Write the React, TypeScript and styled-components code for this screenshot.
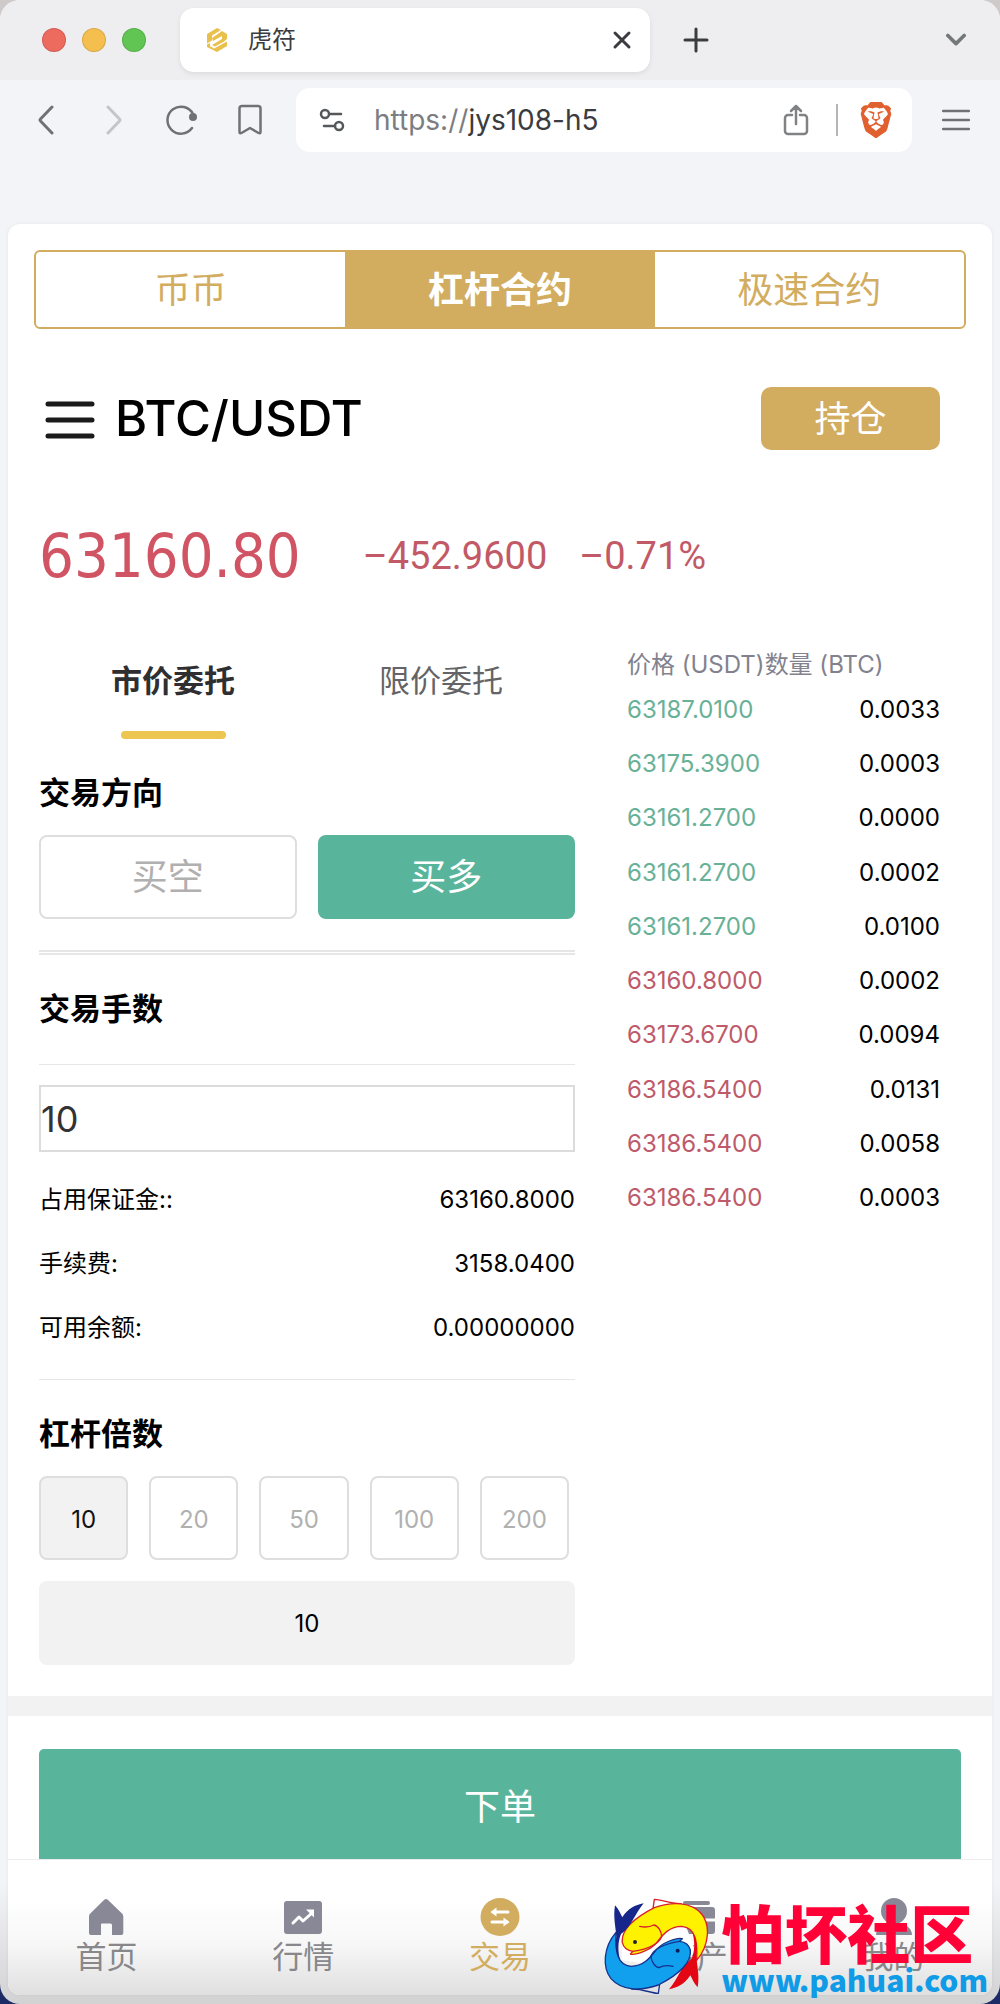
import React, { useState } from "react";
import styled, { createGlobalStyle } from "styled-components";
import { SiBrave } from "react-icons/si";

const gold = "#d2ad60";
const green = "#58b59b";
const sans = `Inter, "Noto Sans CJK SC", sans-serif`;

const GlobalStyle = createGlobalStyle`
  *, *::before, *::after { box-sizing: border-box; }
  body {
    margin: 0;
    background: linear-gradient(#cfcaca 0 50%, #1c2a66 50% 100%);
    font-family: ${sans};
    color: #000;
  }
  button, input { font: inherit; color: inherit; margin: 0; }
  button { padding: 0; border: 0; background: none; cursor: pointer; }
  a { color: inherit; text-decoration: none; }
  svg { display: block; }
`;

/* ---------- browser frame ---------- */

const Window = styled.div`
  position: relative;
  min-height: 100vh;
  padding-bottom: 9px;
  background: linear-gradient(#f3f4f7 0, #f3f4f7 calc(100% - 120px), #d2d2d3 100%);
  border-radius: 20px;
  overflow: hidden;
`;

const TabStrip = styled.header`
  display: flex;
  align-items: center;
  height: 80px;
  padding: 0 34px 0 42px;
  background: #eeeef0;
`;

const Lights = styled.div`
  display: flex;
  gap: 16px;
  margin-right: 34px;
`;

const Light = styled.button<{ $color: string }>`
  width: 24px;
  height: 24px;
  border-radius: 50%;
  border: 1px solid rgba(0, 0, 0, 0.12);
  background: ${(p) => p.$color};
`;

const BrowserTab = styled.div`
  display: flex;
  align-items: center;
  flex: 0 1 470px;
  height: 64px;
  padding: 0 18px 0 24px;
  background: #fff;
  border-radius: 14px;
  box-shadow: 0 2px 5px rgba(0, 0, 0, 0.08);
`;

const TabTitle = styled.span`
  flex: 1;
  margin-left: 18px;
  font-size: 24px;
  line-height: 32px;
  color: #3b3c40;
`;

const IconButton = styled.button<{ $size?: number }>`
  display: flex;
  align-items: center;
  justify-content: center;
  flex: none;
  width: ${(p) => p.$size ?? 32}px;
  height: ${(p) => p.$size ?? 32}px;
`;

const NewTab = styled(IconButton)`
  margin-left: 30px;
  margin-right: auto;
`;

const Toolbar = styled.div`
  display: flex;
  align-items: center;
  justify-content: space-between;
  height: 80px;
  padding: 0 28px 0 30px;
`;

const ToolIcons = styled.div`
  display: flex;
  align-items: center;
  gap: 36px;
  margin-right: 30px;
`;

const AddressBar = styled.div`
  display: flex;
  align-items: center;
  flex: 1;
  height: 64px;
  margin-right: 28px;
  padding: 0 18px 0 20px;
  background: #fff;
  border-radius: 14px;
`;

const Url = styled.span`
  flex: 1;
  margin-left: 26px;
  font-size: 28px;
  line-height: 40px;
  color: #3b3c40;
`;

const Scheme = styled.span`
  color: #7b7d81;
`;

const BarDivider = styled.span`
  width: 2px;
  height: 32px;
  margin: 0 20px 0 24px;
  background: #b5b5b8;
`;

/* ---------- page ---------- */

const Page = styled.main`
  margin: 64px 8px 0;
  background: #fff;
  border-radius: 12px;
  box-shadow: 0 0 4px rgba(0, 0, 0, 0.06);
  overflow: hidden;
`;

const Segmented = styled.nav`
  display: grid;
  grid-template-columns: repeat(3, 1fr);
  height: 79px;
  margin: 26px 26px 0;
  border: 2px solid ${gold};
  border-radius: 6px;
`;

const Segment = styled.button<{ $active: boolean }>`
  font-size: 36px;
  line-height: 48px;
  font-weight: ${(p) => (p.$active ? 600 : 400)};
  color: ${(p) => (p.$active ? "#fff" : gold)};
  background: ${(p) => (p.$active ? gold : "transparent")};
`;

const PairBar = styled.div`
  display: flex;
  align-items: center;
  margin-top: 58px;
  padding: 0 52px 0 36px;
`;

const Pair = styled.h1`
  flex: 1;
  margin: 0 0 0 19px;
  font-size: 49px;
  line-height: 60px;
  font-weight: 500;
`;

const PositionButton = styled.button`
  width: 179px;
  height: 63px;
  border-radius: 10px;
  font-size: 36px;
  line-height: 48px;
  color: #fff;
  background: ${gold};
`;

const Quote = styled.div`
  display: flex;
  align-items: center;
  margin-top: 74px;
  padding: 0 31px;
  line-height: 64px;
`;

const LastPrice = styled.strong`
  margin-right: 62px;
  font-family: "DejaVu Sans Condensed", "DejaVu Sans", sans-serif;
  font-size: 61px;
  font-weight: 400;
  color: #d05463;
`;

const Change = styled.span`
  margin-right: 32px;
  font-family: Roboto, sans-serif;
  font-size: 38px;
  color: #c25966;
`;

const Columns = styled.div`
  display: grid;
  grid-template-columns: minmax(0, 536fr) minmax(0, 313fr);
  column-gap: 52px;
  align-items: start;
  margin-top: 61px;
  padding: 0 52px 31px 31px;
`;

const OrderForm = styled.form`
  display: flex;
  flex-direction: column;
  padding-top: 12px;
`;

const OrderTabs = styled.div`
  display: grid;
  grid-template-columns: 1fr 1fr;
`;

const OrderTab = styled.button<{ $active: boolean }>`
  display: flex;
  flex-direction: column;
  align-items: center;
  gap: 30px;
  height: 78px;
  font-size: 31px;
  line-height: 40px;
  font-weight: ${(p) => (p.$active ? 600 : 400)};
  color: ${(p) => (p.$active ? "#2f2f31" : "#646466")};

  &::after {
    content: "";
    width: 105px;
    height: 8px;
    border-radius: 4px;
    background: ${(p) => (p.$active ? "#ecc650" : "transparent")};
  }
`;

const SectionTitle = styled.h2`
  margin: 34px 0 0;
  font-size: 31px;
  line-height: 40px;
  font-weight: 600;
`;

const ButtonRow = styled.div<{ $columns: number; $inset?: boolean }>`
  display: grid;
  grid-template-columns: repeat(${(p) => p.$columns}, 1fr);
  gap: 21px;
  margin-top: 22px;
  padding-right: ${(p) => (p.$inset ? 6 : 0)}px;
`;

const DirectionButton = styled.button<{ $active: boolean }>`
  height: 84px;
  border: ${(p) => (p.$active ? "0" : "2px solid #dedede")};
  border-radius: 8px;
  font-size: 36px;
  line-height: 48px;
  color: ${(p) => (p.$active ? "#fff" : "#b0b0b0")};
  background: ${(p) => (p.$active ? green : "#fff")};
`;

const LeverageButton = styled.button<{ $active: boolean }>`
  height: 84px;
  padding-top: 4px;
  border: 2px solid #dedede;
  border-radius: 8px;
  font-size: 24px;
  line-height: 32px;
  color: ${(p) => (p.$active ? "#111" : "#b0b0b0")};
  background: ${(p) => (p.$active ? "#f2f2f2" : "#fff")};
`;

const Rule = styled.hr<{ $gap: number; $double?: boolean }>`
  width: 100%;
  margin: ${(p) => p.$gap}px 0 0;
  border: 0;
  border-top: ${(p) => (p.$double ? "5px double" : "1px solid")} #e6e6e6;
`;

const LotInput = styled.input`
  width: 100%;
  height: 67px;
  margin-top: 20px;
  padding: 0;
  border: 2px solid #dcdcdc;
  border-radius: 0;
  font-size: 36px;
  line-height: 48px;
  color: #333;
  background: #fff;
`;

const Facts = styled.dl`
  margin: 16px 0 0;
`;

const Fact = styled.div`
  display: flex;
  justify-content: space-between;
  align-items: center;
  height: 64px;
  font-size: 24px;
  line-height: 32px;

  dt, dd { margin: 0; }
`;

const LeverageValue = styled.input`
  width: 100%;
  height: 84px;
  margin-top: 21px;
  border: 0;
  border-radius: 8px;
  font-size: 24px;
  line-height: 32px;
  text-align: center;
  background: #f2f2f2;
`;

const Book = styled.table`
  display: block;
  width: 100%;
  font-size: 24px;
  line-height: 32px;

  thead { display: block; }
  tbody {
    display: flex;
    flex-direction: column;
    justify-content: space-between;
    height: 542px;
  }
  th, td { padding: 0; font-weight: 400; }
`;

const BookHead = styled.tr`
  display: flex;
  height: 34px;
  color: #82828e;
  white-space: nowrap;
`;

const BookRow = styled.tr<{ $up: boolean }>`
  display: flex;
  justify-content: space-between;
  align-items: center;
  height: 54px;

  td:first-child { color: ${(p) => (p.$up ? "#68b197" : "#be5a6a")}; }
`;

const SubmitArea = styled.section`
  padding: 33px 31px 0;
  border-top: 20px solid #f2f2f2;
`;

const SubmitButton = styled.button`
  display: block;
  width: 100%;
  height: 110px;
  padding-top: 6px;
  border-radius: 5px 5px 0 0;
  font-size: 36px;
  line-height: 48px;
  color: #fff;
  background: ${green};
`;

const BottomNav = styled.nav`
  display: grid;
  grid-template-columns: repeat(5, 1fr);
  padding: 38px 0 17px;
  border-top: 1px solid #ececec;
  background: linear-gradient(#fff 30%, #f6f6f6 65%, #dfdfe0 100%);
`;

const NavItem = styled.a<{ $active?: boolean }>`
  display: flex;
  flex-direction: column;
  align-items: center;
  font-size: 31px;
  line-height: 42px;
  color: ${(p) => (p.$active ? gold : "#88888b")};
`;

const Watermark = styled.div`
  position: absolute;
  right: 12px;
  bottom: 8px;
  display: flex;
  align-items: center;
  gap: 12px;
  pointer-events: none;
`;

const WatermarkText = styled.div`
  display: flex;
  flex-direction: column;
`;

const WatermarkName = styled.span`
  font-family: "Noto Sans CJK SC", sans-serif;
  font-size: 63px;
  line-height: 64px;
  font-weight: 900;
  color: #ff0037;
`;

const WatermarkUrl = styled.span`
  font-family: "Noto Sans CJK SC", sans-serif;
  font-size: 30px;
  line-height: 32px;
  font-weight: 900;
  color: #0f9be6;
`;

/* ---------- drawings ---------- */

const stroke = (color: string, width: number) => ({
  fill: "none",
  stroke: color,
  strokeWidth: width,
  strokeLinecap: "round" as const,
  strokeLinejoin: "round" as const,
});

const Favicon = () => (
  <svg width="26" height="26" viewBox="0 0 26 26" aria-hidden="true">
    <g fill="#e9c04c">
      <path d="M3 7 13 1l4 2-9 5.500v5L3 16.500z" />
      <path d="M18 4l5 3v5l-3 2.500-9 5-3-1.500L18 12V9l-9 5-1-3z" />
      <path d="m3 17.500 3-1.500v3l4 2.500 13-7V19l-10 6L3 20z" />
    </g>
  </svg>
);

const FISH_BODY =
  "M80 152C76 118 108 82 176 47C232 28 286 30 318 66C344 98 342 160 303 205C306 150 300 106 258 103C220 103 200 130 186 148C166 176 118 190 104 186L112 178C94 176 84 168 80 152Z";
const FISH_TAIL =
  "M290 118C304 145 306 170 302 192C304 222 312 250 306 286C296 276 290 262 284 250C266 278 246 286 220 292C246 262 256 222 288 200C298 176 298 150 290 118Z";
const FISH_HEAD =
  "M112 178C150 172 188 158 198 134C198 118 186 100 174 99C158 108 146 106 132 103";

const Fish = ({ fill, line, tail, eye }: { fill: string; line: string; tail: string; eye: string }) => (
  <>
    <path d="M172 50 176 22C198 22 222 36 256 35" {...stroke(line, 4)} />
    <path d={FISH_BODY} fill={fill} stroke={line} strokeWidth="4" strokeLinejoin="round" />
    <path d={FISH_TAIL} fill={tail} />
    <path d={FISH_HEAD} {...stroke(line, 4)} />
    <circle cx="118" cy="150" r="6" fill={eye} />
  </>
);

const FishLogo = () => (
  <svg width="106" height="98" viewBox="22 18 318 294" aria-hidden="true">
    <path d="M78 150Q110 80 270 100L300 180Q240 240 150 215L80 205Z" fill="#fff" />
    <Fish fill="#fff200" line="#d9202a" tail="#e30613" eye="#222" />
    <g transform="rotate(180 182 163)">
      <Fish fill="#10a0ee" line="#17318c" tail="#16268a" eye="#0b1c55" />
    </g>
  </svg>
);

const HomeIcon = () => (
  <svg width="38" height="38" viewBox="0 0 38 38" aria-hidden="true">
    <path
      d="M17.500 1.600a2.300 2.300 0 0 1 3 0L35 15.500a4 4 0 0 1 1.300 3V35a2 2 0 0 1-2 2H25V27a1.500 1.500 0 0 0-1.500-1.500h-9A1.500 1.500 0 0 0 14 27v10H4a2 2 0 0 1-2-2V18.500a4 4 0 0 1 1.300-3z"
      fill="#898897"
    />
  </svg>
);

const MarketIcon = () => (
  <svg width="40" height="38" viewBox="0 0 40 38" aria-hidden="true">
    <rect x="1" y="3" width="38" height="33" rx="3" fill="#898897" />
    <path d="m10 25 6-6 4 4 9-8" {...stroke("#fff", 3)} />
    <path d="M23 11.500h8v8z" fill="#fff" />
  </svg>
);

const TradeIcon = () => (
  <svg width="40" height="38" viewBox="0 0 40 38" aria-hidden="true">
    <ellipse cx="20" cy="19" rx="19.500" ry="19" fill={gold} />
    <path d="M13 14h15M12 24h15" {...stroke("#fff", 3)} />
    <path d="m10.500 14 6-4.500v9zM29.500 24l-6-4.500v9z" fill="#fff" />
  </svg>
);

const WalletIcon = () => (
  <svg width="38" height="38" viewBox="0 0 38 38" aria-hidden="true">
    <rect x="5" y="3" width="27" height="4" rx="2" fill="#898897" />
    <rect x="1" y="9" width="36" height="27" rx="3" fill="#898897" />
    <path d="M25 22h12" {...stroke("#fff", 3)} />
  </svg>
);

const PersonIcon = () => (
  <svg width="38" height="38" viewBox="0 0 38 38" aria-hidden="true">
    <ellipse cx="19" cy="13" rx="13" ry="13" fill="#898897" />
    <path d="M1 37c0-6 6-11 11-12h14c5 1 11 6 11 12z" fill="#898897" />
  </svg>
);

/* ---------- data ---------- */

const book: { price: string; amount: string; up: boolean }[] = [
  { price: "63187.0100", amount: "0.0033", up: true },
  { price: "63175.3900", amount: "0.0003", up: true },
  { price: "63161.2700", amount: "0.0000", up: true },
  { price: "63161.2700", amount: "0.0002", up: true },
  { price: "63161.2700", amount: "0.0100", up: true },
  { price: "63160.8000", amount: "0.0002", up: false },
  { price: "63173.6700", amount: "0.0094", up: false },
  { price: "63186.5400", amount: "0.0131", up: false },
  { price: "63186.5400", amount: "0.0058", up: false },
  { price: "63186.5400", amount: "0.0003", up: false },
];

const facts = [
  ["占用保证金::", "63160.8000"],
  ["手续费:", "3158.0400"],
  ["可用余额:", "0.00000000"],
];

const navItems = [
  { label: "首页", icon: <HomeIcon /> },
  { label: "行情", icon: <MarketIcon /> },
  { label: "交易", icon: <TradeIcon />, active: true },
  { label: "资产", icon: <WalletIcon /> },
  { label: "我的", icon: <PersonIcon /> },
];

export default function App() {
  const [segment, setSegment] = useState("杠杆合约");
  const [orderType, setOrderType] = useState("市价委托");
  const [direction, setDirection] = useState("买多");
  const [lots, setLots] = useState("10");
  const [leverage, setLeverage] = useState("10");

  return (
    <Window>
      <GlobalStyle />
      <TabStrip>
        <Lights>
          <Light $color="#ed6a5f" aria-label="关闭窗口" />
          <Light $color="#f5bf4f" aria-label="最小化" />
          <Light $color="#61c554" aria-label="全屏" />
        </Lights>
        <BrowserTab>
          <Favicon />
          <TabTitle>虎符</TabTitle>
          <IconButton $size={20} aria-label="关闭标签页">
            <svg width="20" height="20" viewBox="0 0 20 20"><path d="m3 3 14 14M17 3 3 17" {...stroke("#3b3c40", 3)} /></svg>
          </IconButton>
        </BrowserTab>
        <NewTab aria-label="新标签页">
          <svg width="26" height="26" viewBox="0 0 26 26"><path d="M13 2v22M2 13h22" {...stroke("#3b3c40", 3)} /></svg>
        </NewTab>
        <IconButton $size={20} aria-label="标签页列表">
          <svg width="22" height="14" viewBox="0 0 22 14"><path d="m2 2 9 9 9-9" {...stroke("#75787a", 4)} /></svg>
        </IconButton>
      </TabStrip>

      <Toolbar>
        <ToolIcons>
          <IconButton aria-label="后退">
            <svg width="16" height="30" viewBox="0 0 16 30"><path d="M14 2 2.500 14q-1 1 0 2L14 28" {...stroke("#6f7275", 3)} /></svg>
          </IconButton>
          <IconButton aria-label="前进">
            <svg width="16" height="30" viewBox="0 0 16 30"><path d="m2 2 11.500 12q1 1 0 2L2 28" {...stroke("#c3c5c8", 3)} /></svg>
          </IconButton>
          <IconButton aria-label="刷新">
            <svg width="32" height="32" viewBox="0 0 32 32">
              <path d="M27 10A13.500 13.500 0 1 0 26 24" {...stroke("#6f7275", 2.5)} />
              <circle cx="27" cy="13" r="4" fill="#6f7275" />
            </svg>
          </IconButton>
          <IconButton aria-label="书签">
            <svg width="24" height="32" viewBox="0 0 24 32">
              <path d="M4 2h16a2.500 2.500 0 0 1 2.500 2.500V28q0 2-2 1L12 24l-8.500 5q-2 1-2-1V4.500A2.500 2.500 0 0 1 4 2z" {...stroke("#6f7275", 2.5)} />
            </svg>
          </IconButton>
        </ToolIcons>
        <AddressBar>
          <IconButton $size={32} aria-label="网站设置">
            <svg width="28" height="26" viewBox="0 0 28 26">
              <circle cx="7" cy="7" r="4" {...stroke("#55585b", 2.5)} />
              <path d="M12 7h11M6 19h11" {...stroke("#55585b", 2.5)} />
              <circle cx="21" cy="19" r="4" {...stroke("#55585b", 2.5)} />
            </svg>
          </IconButton>
          <Url><Scheme>https://</Scheme>jys108-h5</Url>
          <IconButton aria-label="分享">
            <svg width="26" height="32" viewBox="0 0 26 32">
              <path d="M9 11H5a3 3 0 0 0-3 3v13a3 3 0 0 0 3 3h16a3 3 0 0 0 3-3V14a3 3 0 0 0-3-3h-4M13 20V2M8 7l5-5 5 5" {...stroke("#808284", 2.5)} />
            </svg>
          </IconButton>
          <BarDivider />
          <IconButton $size={36} aria-label="Brave">
            <SiBrave size={36} color="#e0602f" />
          </IconButton>
        </AddressBar>
        <IconButton aria-label="菜单">
          <svg width="28" height="24" viewBox="0 0 28 24"><path d="M1 3h26M1 12h26M1 21h26" {...stroke("#6f7275", 2.5)} /></svg>
        </IconButton>
      </Toolbar>

      <Page>
        <Segmented>
          {["币币", "杠杆合约", "极速合约"].map((s) => (
            <Segment key={s} $active={s === segment} onClick={() => setSegment(s)}>{s}</Segment>
          ))}
        </Segmented>

        <PairBar>
          <IconButton $size={52} aria-label="选择交易对">
            <svg width="52" height="40" viewBox="0 0 52 40"><path d="M4 5h44M4 21h44M4 37h44" {...stroke("#1b1b1b", 5)} /></svg>
          </IconButton>
          <Pair>BTC/USDT</Pair>
          <PositionButton>持仓</PositionButton>
        </PairBar>

        <Quote>
          <LastPrice>63160.80</LastPrice>
          <Change>–452.9600</Change>
          <Change>–0.71%</Change>
        </Quote>

        <Columns>
          <OrderForm onSubmit={(e) => e.preventDefault()}>
            <OrderTabs>
              {["市价委托", "限价委托"].map((t) => (
                <OrderTab key={t} type="button" $active={t === orderType} onClick={() => setOrderType(t)}>{t}</OrderTab>
              ))}
            </OrderTabs>

            <SectionTitle>交易方向</SectionTitle>
            <ButtonRow $columns={2}>
              {["买空", "买多"].map((d) => (
                <DirectionButton key={d} type="button" $active={d === direction} onClick={() => setDirection(d)}>{d}</DirectionButton>
              ))}
            </ButtonRow>

            <Rule $gap={31} $double />
            <SectionTitle><label htmlFor="lots">交易手数</label></SectionTitle>
            <Rule $gap={35} />
            <LotInput id="lots" value={lots} onChange={(e) => setLots(e.target.value)} />

            <Facts>
              {facts.map(([name, value]) => (
                <Fact key={name}><dt>{name}</dt><dd>{value}</dd></Fact>
              ))}
            </Facts>

            <Rule $gap={19} />
            <SectionTitle><label htmlFor="leverage">杠杆倍数</label></SectionTitle>
            <ButtonRow $columns={5} $inset>
              {["10", "20", "50", "100", "200"].map((l) => (
                <LeverageButton key={l} type="button" $active={l === leverage} onClick={() => setLeverage(l)}>{l}</LeverageButton>
              ))}
            </ButtonRow>
            <LeverageValue id="leverage" value={leverage} onChange={(e) => setLeverage(e.target.value)} />
          </OrderForm>

          <Book>
            <thead>
              <BookHead><th scope="col">价格 (USDT)</th><th scope="col">数量 (BTC)</th></BookHead>
            </thead>
            <tbody>
              {book.map((row, i) => (
                <BookRow key={i} $up={row.up}><td>{row.price}</td><td>{row.amount}</td></BookRow>
              ))}
            </tbody>
          </Book>
        </Columns>

        <SubmitArea>
          <SubmitButton>下单</SubmitButton>
        </SubmitArea>

        <BottomNav>
          {navItems.map((item) => (
            <NavItem key={item.label} href="#" $active={item.active}>{item.icon}{item.label}</NavItem>
          ))}
        </BottomNav>
      </Page>

      <Watermark>
        <FishLogo />
        <WatermarkText>
          <WatermarkName>怕坏社区</WatermarkName>
          <WatermarkUrl>www.pahuai.com</WatermarkUrl>
        </WatermarkText>
      </Watermark>
    </Window>
  );
}
